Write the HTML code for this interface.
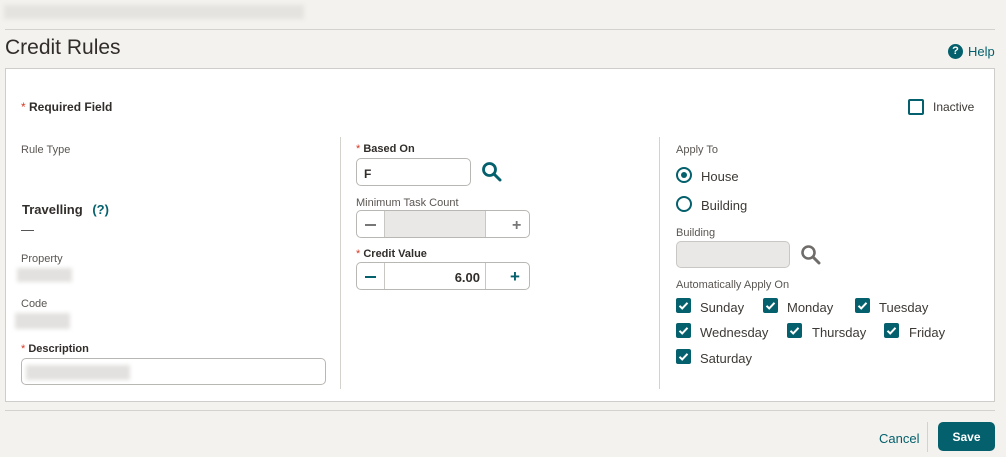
<!DOCTYPE html>
<html><head><style>
*{box-sizing:border-box;margin:0;padding:0}
body{width:1006px;height:457px;background:#f4f2ee;font-family:"Liberation Sans",sans-serif;position:relative;overflow:hidden;color:#312d2a}
.a{position:absolute}
.lbl{font-size:11px;color:#5a5652}
.req{font-size:11px;font-weight:bold;color:#312d2a}
.req::before{content:"* ";color:#d63b25;font-weight:normal}
.blur{background:#e2e1df;filter:blur(2px)}
.day{font-size:13px;color:#3d3935}
.teal{color:#04606c}
</style></head><body>
<div class="a blur" style="left:4px;top:5px;width:300px;height:14px;background:#e4e3df"></div>
<div class="a" style="left:5px;top:29px;width:990px;height:1px;background:#d4d2cd"></div>
<div class="a" style="left:5px;top:36px;font-size:21px;color:#312d2a">Credit Rules</div>
<div class="a teal" style="left:948px;top:44px;width:15px;height:15px;border-radius:50%;background:#04606c;color:#fff;font-size:11px;font-weight:bold;text-align:center;line-height:15px">?</div>
<div class="a teal" style="left:968px;top:44px;font-size:13px">Help</div>
<div class="a" style="left:5px;top:68px;width:990px;height:334px;background:#fff;border:1px solid #cfcdc9"></div>
<div class="a req" style="left:21px;top:100px;font-size:12px">Required Field</div>
<div class="a" style="left:908px;top:99px;width:16px;height:16px;border:2px solid #04606c;border-radius:2px"></div>
<div class="a day" style="left:933px;top:100px;font-size:12px">Inactive</div>
<div class="a" style="left:340px;top:137px;width:1px;height:252px;background:#d4d2cd"></div>
<div class="a" style="left:659px;top:137px;width:1px;height:252px;background:#d4d2cd"></div>
<!-- col1 -->
<div class="a lbl" style="left:21px;top:144px">Rule Type</div>
<div class="a" style="left:22px;top:202px;font-size:13px;font-weight:bold">Travelling <span class="teal" style="margin-left:6px">(?)</span></div>
<div class="a" style="left:21px;top:230px;width:13px;height:1px;background:#555"></div>
<div class="a lbl" style="left:21px;top:253px">Property</div>
<div class="a blur" style="left:17px;top:268px;width:55px;height:14px"></div>
<div class="a lbl" style="left:21px;top:298px">Code</div>
<div class="a blur" style="left:15px;top:313px;width:55px;height:16px"></div>
<div class="a req" style="left:21px;top:343px">Description</div>
<div class="a" style="left:21px;top:358px;width:305px;height:27px;border:1px solid #b9b7b3;border-radius:5px"></div>
<div class="a blur" style="left:26px;top:365px;width:104px;height:15px"></div>
<!-- col2 -->
<div class="a req" style="left:356px;top:143px">Based On</div>
<div class="a" style="left:356px;top:158px;width:115px;height:28px;border:1px solid #b9b7b3;border-radius:5px;font-size:12px;font-weight:bold;padding:8px 0 0 7px">F</div>
<svg class="a" style="left:481px;top:161px" width="21" height="21" viewBox="0 0 21 21"><circle cx="8.5" cy="8.5" r="6" fill="none" stroke="#04606c" stroke-width="2.8"/><path d="M13 13l6 6" stroke="#04606c" stroke-width="3" stroke-linecap="round"/></svg>
<div class="a lbl" style="left:356px;top:197px">Minimum Task Count</div>
<div class="a" style="left:356px;top:210px;width:174px;height:28px;border:1px solid #b9b7b3;border-radius:5px;overflow:hidden">
 <div class="a" style="left:27px;top:0;width:102px;height:28px;background:#e9e8e6;border-left:1px solid #c9c7c3;border-right:1px solid #c9c7c3"></div>
 <div class="a" style="left:8px;top:13px;width:11px;height:2px;background:#777"></div>
 <div class="a" style="left:155px;top:6px;font-size:16px;color:#777;font-weight:bold">+</div>
</div>
<div class="a req" style="left:356px;top:248px">Credit Value</div>
<div class="a" style="left:356px;top:262px;width:174px;height:28px;border:1px solid #b9b7b3;border-radius:5px;overflow:hidden">
 <div class="a" style="left:27px;top:0;width:102px;height:28px;border-left:1px solid #c9c7c3;border-right:1px solid #c9c7c3;text-align:right;padding:7px 5px 0 0;font-size:13px;font-weight:bold">6.00</div>
 <div class="a" style="left:8px;top:13px;width:11px;height:2px;background:#04606c"></div>
 <div class="a teal" style="left:153px;top:4px;font-size:17px;font-weight:bold">+</div>
</div>
<!-- col3 -->
<div class="a lbl" style="left:676px;top:144px">Apply To</div>
<div class="a" style="left:676px;top:167px;width:16px;height:16px;border:2px solid #04606c;border-radius:50%"><div style="margin:3px;width:6px;height:6px;border-radius:50%;background:#04606c"></div></div>
<div class="a day" style="left:701px;top:169px">House</div>
<div class="a" style="left:676px;top:196px;width:16px;height:16px;border:2px solid #04606c;border-radius:50%"></div>
<div class="a day" style="left:701px;top:198px">Building</div>
<div class="a lbl" style="left:676px;top:227px">Building</div>
<div class="a" style="left:676px;top:241px;width:114px;height:27px;background:#e9e8e6;border:1px solid #c9c7c3;border-radius:5px"></div>
<svg class="a" style="left:800px;top:244px" width="21" height="21" viewBox="0 0 21 21"><circle cx="8.5" cy="8.5" r="6" fill="none" stroke="#6f6c69" stroke-width="2.6"/><path d="M13 13l6 6" stroke="#6f6c69" stroke-width="3" stroke-linecap="round"/></svg>
<div class="a lbl" style="left:676px;top:279px">Automatically Apply On</div>
<svg width="0" height="0" style="position:absolute"><defs><symbol id="ck" viewBox="0 0 15 15"><rect width="15" height="15" rx="2" fill="#04606c"/><path d="M3.5 7.8l2.7 2.6 5.3-5.6" fill="none" stroke="#fff" stroke-width="2"/></symbol></defs></svg>
<svg class="a" style="left:676px;top:298px" width="15" height="15"><use href="#ck"/></svg><div class="a day" style="left:700px;top:300px">Sunday</div>
<svg class="a" style="left:763px;top:298px" width="15" height="15"><use href="#ck"/></svg><div class="a day" style="left:787px;top:300px">Monday</div>
<svg class="a" style="left:855px;top:298px" width="15" height="15"><use href="#ck"/></svg><div class="a day" style="left:879px;top:300px">Tuesday</div>
<svg class="a" style="left:676px;top:323px" width="15" height="15"><use href="#ck"/></svg><div class="a day" style="left:700px;top:325px">Wednesday</div>
<svg class="a" style="left:787px;top:323px" width="15" height="15"><use href="#ck"/></svg><div class="a day" style="left:812px;top:325px">Thursday</div>
<svg class="a" style="left:884px;top:323px" width="15" height="15"><use href="#ck"/></svg><div class="a day" style="left:909px;top:325px">Friday</div>
<svg class="a" style="left:676px;top:349px" width="15" height="15"><use href="#ck"/></svg><div class="a day" style="left:700px;top:351px">Saturday</div>
<!-- footer -->
<div class="a" style="left:5px;top:410px;width:990px;height:1px;background:#d4d2cd"></div>
<div class="a teal" style="left:879px;top:431px;font-size:13px">Cancel</div>
<div class="a" style="left:927px;top:422px;width:1px;height:30px;background:#d4d2cd"></div>
<div class="a" style="left:938px;top:422px;width:57px;height:29px;background:#04606c;border-radius:5px;color:#fff;font-size:12px;font-weight:bold;text-align:center;line-height:31px">Save</div>
</body></html>
